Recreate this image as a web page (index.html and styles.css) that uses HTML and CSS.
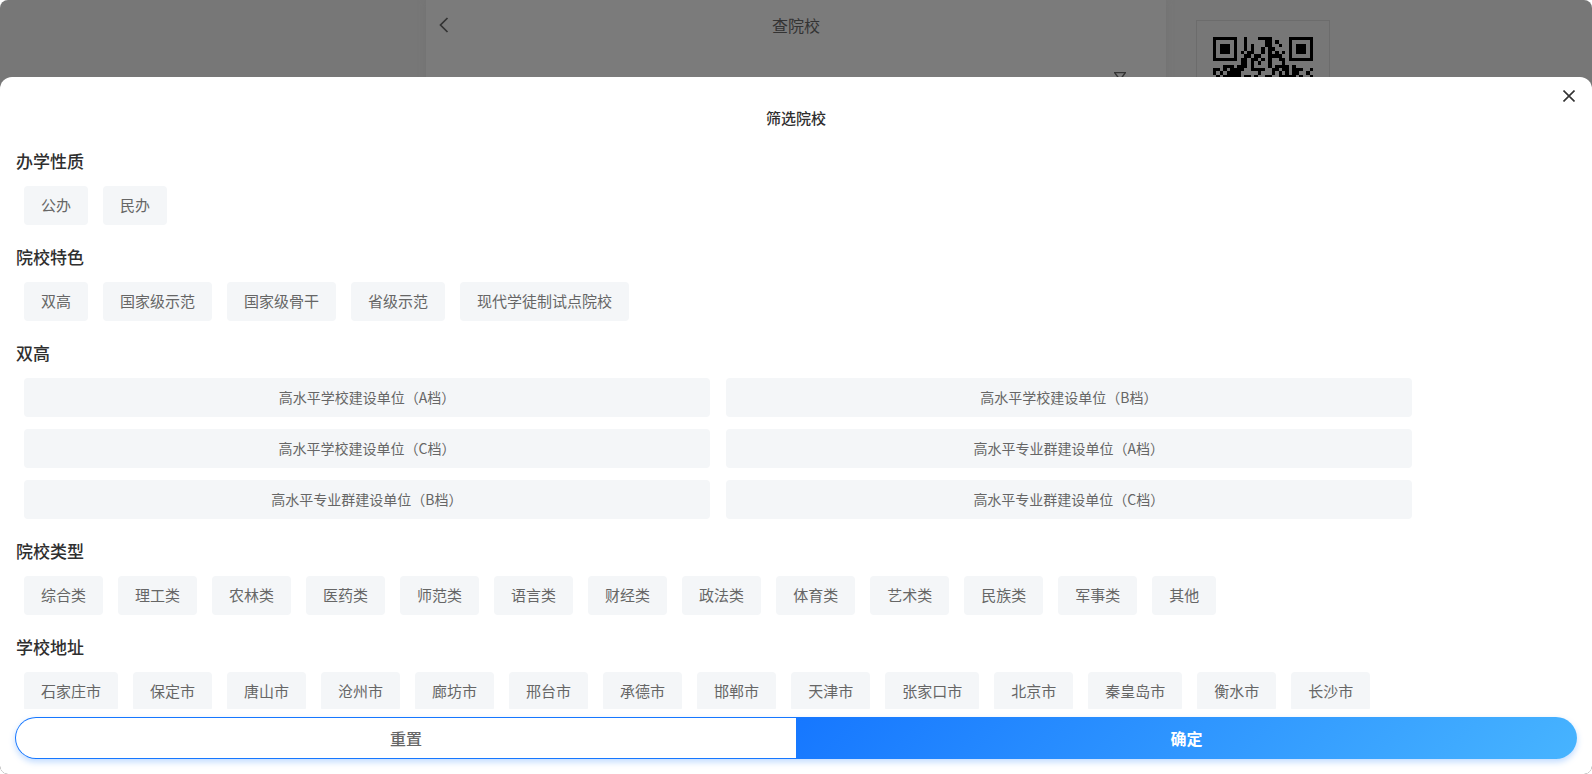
FILE: index.html
```html
<!DOCTYPE html>
<html lang="zh-CN">
<head>
<meta charset="utf-8">
<title>查院校</title>
<link rel="stylesheet" href="styles.css">
</head>
<body>
<div class="app">
  <div class="page" aria-hidden="true">
    <div class="phone">
      <header class="navbar">
        <svg class="back" viewBox="0 0 10 16" width="10" height="16"><path d="M8.500 1 1.500 8l7 7" fill="none" stroke="currentColor" stroke-width="1.700"/></svg>
        <h1 class="navbar-title">查院校</h1>
      </header>
      <svg class="funnel" viewBox="0 0 12 12" width="12" height="12"><path d="M.5.5h11L7 6.500V11H5V6.500z" fill="none" stroke="currentColor" stroke-width="1.300"/></svg>
    </div>
    <div class="qr-card">
      <svg class="qr" viewBox="0 0 29 29" width="100" height="100" shape-rendering="crispEdges">
        <path fill="#000" fill-rule="evenodd" d="M0 0h7v7H0zM1 1v5h5V1zM22 0h7v7h-7zM23 1v5h5V1zM0 22h7v7H0zM1 23v5h5v-5z"/>
        <path d="M2 2h3v3H2zM24 2h3v3h-3zM2 24h3v3H2z"/>
        <path d="M9 0h1v4H9zM13 0h4v1h-4zM15 1h2v2h-2zM18 1h1v1h-1zM19 2h1v1h-1zM11 2h1v3h-1zM14 3h1v2h-1zM16 3h1v6h-1zM17 3h1v1h-1zM8 4h1v1H8zM18 4h1v1h-1zM20 4h1v1h-1zM10 4h1v2h-1zM12 5h1v1h-1zM17 5h3v1h-3zM9 5h1v1H9zM8 6h2v2H8zM11 6h1v3h-1zM13 5h1v1h-1zM14 6h1v1h-1zM19 6h1v1h-1zM13 7h1v1h-1zM12 6h1v1h-1zM20 6h1v2h-1zM3 8h3v1H3zM7 8h3v1H7zM18 8h2v1h-2zM21 8h1v3h-1zM23 8h1v2h-1zM0 9h2v1H0zM3 9h1v1H3zM5 9h4v1H5zM11 9h4v1h-4zM17 9h2v1h-2zM20 8h1v2h-1zM24 9h2v1h-2zM28 9h1v1h-1zM0 10h1v1H0zM2 10h1v1H2zM4 10h4v1H4zM13 10h1v1h-1zM17 10h1v1h-1zM19 10h1v2h-1zM23 10h2v1h-2zM27 10h1v1h-1zM1 11h1v1H1zM3 11h5v1H3zM9 11h2v1H9zM12 11h1v1h-1zM15 11h2v1h-2zM20 11h4v1h-4zM25 11h1v1h-1zM28 11h1v1h-1z"/>
      </svg>
    </div>
  </div>
  <section class="sheet" role="dialog" aria-labelledby="sheet-title">
    <button class="close" type="button" aria-label="关闭"><svg viewBox="0 0 12 12" width="12" height="12"><path d="m.5.5 11 11m0-11-11 11" fill="none" stroke="currentColor" stroke-width="1.600"/></svg></button>
    <h2 class="sheet-title" id="sheet-title">筛选院校</h2>
    <div class="groups">
      <h3 class="group-title">办学性质</h3>
      <div class="chips"><button class="chip" type="button">公办</button><button class="chip" type="button">民办</button></div>
      <h3 class="group-title">院校特色</h3>
      <div class="chips"><button class="chip" type="button">双高</button><button class="chip" type="button">国家级示范</button><button class="chip" type="button">国家级骨干</button><button class="chip" type="button">省级示范</button><button class="chip" type="button">现代学徒制试点院校</button></div>
      <h3 class="group-title">双高</h3>
      <div class="chips chips-wide"><button class="chip" type="button">高水平学校建设单位（A档）</button><button class="chip" type="button">高水平学校建设单位（B档）</button><button class="chip" type="button">高水平学校建设单位（C档）</button><button class="chip" type="button">高水平专业群建设单位（A档）</button><button class="chip" type="button">高水平专业群建设单位（B档）</button><button class="chip" type="button">高水平专业群建设单位（C档）</button></div>
      <h3 class="group-title">院校类型</h3>
      <div class="chips"><button class="chip" type="button">综合类</button><button class="chip" type="button">理工类</button><button class="chip" type="button">农林类</button><button class="chip" type="button">医药类</button><button class="chip" type="button">师范类</button><button class="chip" type="button">语言类</button><button class="chip" type="button">财经类</button><button class="chip" type="button">政法类</button><button class="chip" type="button">体育类</button><button class="chip" type="button">艺术类</button><button class="chip" type="button">民族类</button><button class="chip" type="button">军事类</button><button class="chip" type="button">其他</button></div>
      <h3 class="group-title">学校地址</h3>
      <div class="chips"><button class="chip" type="button">石家庄市</button><button class="chip" type="button">保定市</button><button class="chip" type="button">唐山市</button><button class="chip" type="button">沧州市</button><button class="chip" type="button">廊坊市</button><button class="chip" type="button">邢台市</button><button class="chip" type="button">承德市</button><button class="chip" type="button">邯郸市</button><button class="chip" type="button">天津市</button><button class="chip" type="button">张家口市</button><button class="chip" type="button">北京市</button><button class="chip" type="button">秦皇岛市</button><button class="chip" type="button">衡水市</button><button class="chip" type="button">长沙市</button></div>
    </div>
    <div class="actions"><button class="reset" type="button">重置</button><button class="confirm" type="button">确定</button></div>
  </section>
</div>
</body>
</html>
```
FILE: styles.css
```css
* { box-sizing: border-box; }
body {
  margin: 0;
  background: #fff;
  color: #2f2f2f;
  font-family: "Noto Sans CJK SC", sans-serif;
}
h1, h2, h3 { margin: 0; }
button { border: 0; font: inherit; cursor: pointer; }
.app {
  position: relative;
  height: 100vh;
  overflow: hidden;
  border-radius: 8px;
  background: #777;
}
.page {
  display: grid;
  grid-template-columns: 1fr 740px 1fr;
}
.phone {
  grid-column: 2;
  height: 100vh;
  background: #7b7b7b;
  box-shadow: 0 0 6px #737373;
}
.navbar {
  display: grid;
  grid-template-columns: 24px 1fr 24px;
  align-items: center;
  height: 50px;
  padding: 0 13px;
  color: #333;
}
.navbar-title {
  font-size: 16px;
  font-weight: 400;
  line-height: 24px;
  text-align: center;
}
.funnel {
  display: block;
  margin: 22px 40px 0 auto;
  color: #333;
}
.qr-card {
  justify-self: start;
  height: 180px;
  margin: 20px 0 0 30px;
  padding: 16px;
  border: 1px solid #6c6c6c;
}
.qr { display: block; }
.sheet {
  position: absolute;
  inset: 77px 0 0;
  display: flex;
  flex-direction: column;
  padding: 28px 15px 15px;
  border-radius: 12px 12px 8px 8px;
  background: #fff;
}
.close {
  position: absolute;
  top: 7px;
  right: 11px;
  display: grid;
  place-items: center;
  width: 24px;
  height: 24px;
  padding: 0;
  background: none;
  color: #333;
}
.sheet-title {
  font-size: 15px;
  font-weight: 500;
  line-height: 26px;
  text-align: center;
}
.groups {
  flex: 1;
  min-height: 0;
  margin-top: 18px;
  overflow: hidden;
}
.group-title {
  padding-left: 1px;
  font-size: 17px;
  font-weight: 500;
  line-height: 24px;
}
.chips {
  display: flex;
  flex-wrap: wrap;
  gap: 12px 15px;
  padding: 13px 9px 20px;
}
.chip {
  height: 39px;
  padding: 0 17px 2px;
  border-radius: 4px;
  background: #f4f6f8;
  color: #666;
  font-size: 15px;
}
.chips-wide {
  display: grid;
  grid-template-columns: 1fr 1fr;
  column-gap: 16px;
  width: 90%;
}
.chips-wide .chip { font-size: 14px; }
.actions {
  display: grid;
  grid-template-columns: 1fr 1fr;
  height: 42px;
  margin-top: 8px;
  border-radius: 21px;
  box-shadow: 0 3px 6px #1677ff44;
}
.reset, .confirm {
  padding: 0 0 1px;
  font-size: 16px;
}
.reset {
  border: 1px solid #1677ff;
  border-right: 0;
  border-radius: 21px 0 0 21px;
  background: #fff;
  color: #666;
  font-weight: 500;
}
.confirm {
  border-radius: 0 21px 21px 0;
  background: linear-gradient(135deg, #1677ff, #47b4ff);
  color: #fff;
  font-weight: 700;
}
```
